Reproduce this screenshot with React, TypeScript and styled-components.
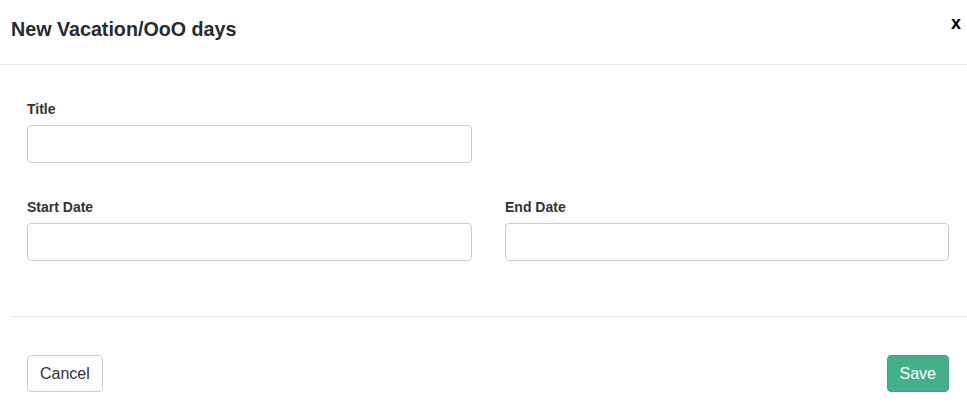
import React from 'react';
import styled, { createGlobalStyle } from 'styled-components';

const Global = createGlobalStyle`
  body {
    margin: 0;
    background: #fff;
    font-family: "Liberation Sans", Arial, sans-serif;
    color: #333;
  }
`;

const Modal = styled.div`
  width: 967px;
  height: 416px;
  background: #fff;
  display: flex;
  flex-direction: column;
`;

const Header = styled.div`
  height: 65px;
  box-sizing: border-box;
  border-bottom: 1px solid #e5e5e5;
  display: flex;
  align-items: flex-start;
  justify-content: space-between;
  padding: 0 6px 0 11px;
`;

const Title = styled.h4`
  margin: 18px 0 0;
  font-size: 19.7px;
  font-weight: 700;
  color: #262b30;
  line-height: 22px;
`;

const Close = styled.button`
  border: none;
  background: none;
  padding: 0;
  margin-top: 13px;
  font-family: "Liberation Sans", Arial, sans-serif;
  font-size: 18px;
  font-weight: 700;
  color: #000;
  line-height: 20px;
  cursor: pointer;
`;

const Body = styled.div`
  padding: 34px 19px 0 16px;
  height: 252px;
  box-sizing: border-box;
  border-bottom: 1px solid #e9e9e9;
  margin-left: 11px;
`;

const Row = styled.div`
  display: grid;
  grid-template-columns: 445px 444px;
  column-gap: 33px;
  margin-bottom: 34px;
`;

const Field = styled.div`
  display: flex;
  flex-direction: column;
`;

const Label = styled.label`
  font-size: 14px;
  font-weight: 700;
  color: #333;
  line-height: 20px;
  margin-bottom: 6px;
`;

const Input = styled.input`
  height: 38px;
  box-sizing: border-box;
  border: 1px solid #ccc;
  border-radius: 4px;
  padding: 6px 12px;
  font-size: 14px;
  outline: none;
`;

const Footer = styled.div`
  display: flex;
  justify-content: space-between;
  padding: 38px 18px 0 27px;
`;

const Button = styled.button<{ $primary?: boolean }>`
  height: 37px;
  box-sizing: border-box;
  padding: 0 12px;
  font-family: "Liberation Sans", Arial, sans-serif;
  font-size: 16px;
  border-radius: 4px;
  border: 1px solid ${(p) => (p.$primary ? '#3fa382' : '#ccc')};
  background: ${(p) => (p.$primary ? '#45ae8c' : '#fff')};
  color: ${(p) => (p.$primary ? '#fff' : '#333')};
  cursor: pointer;
`;

export default function App() {
  return (
    <>
      <Global />
      <Modal>
        <Header>
          <Title>New Vacation/OoO days</Title>
          <Close>x</Close>
        </Header>
        <Body>
          <Row>
            <Field>
              <Label>Title</Label>
              <Input type="text" />
            </Field>
          </Row>
          <Row>
            <Field>
              <Label>Start Date</Label>
              <Input type="text" />
            </Field>
            <Field>
              <Label>End Date</Label>
              <Input type="text" />
            </Field>
          </Row>
        </Body>
        <Footer>
          <Button>Cancel</Button>
          <Button $primary>Save</Button>
        </Footer>
      </Modal>
    </>
  );
}
